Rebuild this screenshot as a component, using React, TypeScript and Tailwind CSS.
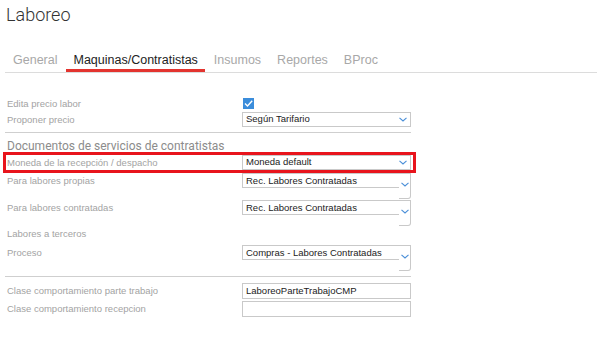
import React from 'react';

const Chevron = () => (
  <svg width="8" height="5" viewBox="0 0 8 5" className="shrink-0">
    <path d="M0.5 0.8 L4 4 L7.5 0.8" fill="none" stroke="#4a8fd8" strokeWidth="1.1" />
  </svg>
);

const Checkbox = () => (
  <svg width="11" height="11" viewBox="0 0 11 11">
    <rect width="11" height="11" fill="#3b8ddb" />
    <path d="M2 5.5 L4.5 8 L9.2 2.8" fill="none" stroke="#fff" strokeWidth="1.4" />
  </svg>
);

const Label = ({ children }: { children: React.ReactNode }) => (
  <div className="w-[237px] shrink-0 pl-[2px] text-[9.5px] leading-[15px] text-[#a3a3a3]">{children}</div>
);

const Select = ({ value }: { value: string }) => (
  <div className="flex items-center justify-between w-[169px] h-[15px] border border-[#c9c9c9] pl-[3px] pr-[3px] text-[9.5px] text-[#222]">
    <span>{value}</span>
    <Chevron />
  </div>
);

const TallSelect = ({ value }: { value: string }) => (
  <div className="flex w-[169px] h-[26px]">
    <div className="w-[157px] h-[15px] border-l border-t border-b border-[#c9c9c9] pl-[3px] text-[9.5px] leading-[13px] text-[#222]">
      {value}
    </div>
    <div className="flex-1 border-t border-r border-b border-[#c9c9c9] rounded-br-[3px] flex justify-center pt-[8px]">
      <Chevron />
    </div>
  </div>
);

const Input = ({ value }: { value?: string }) => (
  <div className="w-[169px] h-[16px] border border-[#c9c9c9] pl-[3px] text-[9.5px] leading-[14px] text-[#222]">{value}</div>
);

export default function App() {
  const tabs = ['General', 'Maquinas/Contratistas', 'Insumos', 'Reportes', 'BProc'];
  return (
    <div className="w-[602px] h-[340px] bg-white overflow-hidden" style={{ fontFamily: '"Liberation Sans", Arial, sans-serif' }}>
      {/* Title */}
      <div className="pt-[3px] pl-[6px] text-[18px] leading-[24px] font-light text-[#333]" style={{ fontFamily: 'Roboto, sans-serif' }}>
        Laboreo
      </div>

      {/* Tabs */}
      <div className="mt-[25px] mx-[5px] flex gap-[2px] pl-[1px] border-b border-[#dcdcdc]">
        {tabs.map((t, i) => (
          <div
            key={t}
            className={
              i === 1
                ? 'px-[7px] pb-[1px] text-[12.5px] leading-[16px] text-[#222] border-b-[3px] border-[#e3342f]'
                : 'px-[7px] pb-[1px] text-[12.5px] leading-[16px] text-[#a8a8a8] border-b-[3px] border-transparent'
            }
          >
            {t}
          </div>
        ))}
      </div>

      {/* Form */}
      <div className="ml-[5px] w-[406px] mt-[22px]">
        <div className="flex h-[16px] items-center">
          <Label>Edita precio labor</Label>
          <div className="pl-[1px]"><Checkbox /></div>
        </div>
        <div className="flex mt-[1px]">
          <Label>Proponer precio</Label>
          <Select value="Según Tarifario" />
        </div>

        <div className="mt-[5px] h-px bg-[#cfcfcf]" />

        <div className="mt-[6px] pl-[2px] text-[12px] leading-[14px] text-[#8c8c8c]" style={{ fontFamily: 'Roboto, sans-serif' }}>
          Documentos de servicios de contratistas
        </div>

        <div className="relative flex mt-[2px]">
          <Label>Moneda de la recepción / despacho</Label>
          <Select value="Moneda default" />
          <div className="absolute -left-[2px] -right-[5px] -top-[3px] -bottom-[3px] border-[3px] border-[#e8141c]" />
        </div>

        <div className="flex mt-[3px]">
          <Label>Para labores propias</Label>
          <TallSelect value="Rec. Labores Contratadas" />
        </div>
        <div className="flex mt-[1px]">
          <Label>Para labores contratadas</Label>
          <TallSelect value="Rec. Labores Contratadas" />
        </div>
        <div className="flex">
          <Label>Labores a terceros</Label>
        </div>
        <div className="flex mt-[4px]">
          <Label>Proceso</Label>
          <TallSelect value="Compras - Labores Contratadas" />
        </div>

        <div className="mt-[5px] h-px bg-[#cfcfcf]" />

        <div className="flex mt-[6px]">
          <Label>Clase comportamiento parte trabajo</Label>
          <Input value="LaboreoParteTrabajoCMP" />
        </div>
        <div className="flex mt-[2px]">
          <Label>Clase comportamiento recepcion</Label>
          <Input />
        </div>
      </div>
    </div>
  );
}
